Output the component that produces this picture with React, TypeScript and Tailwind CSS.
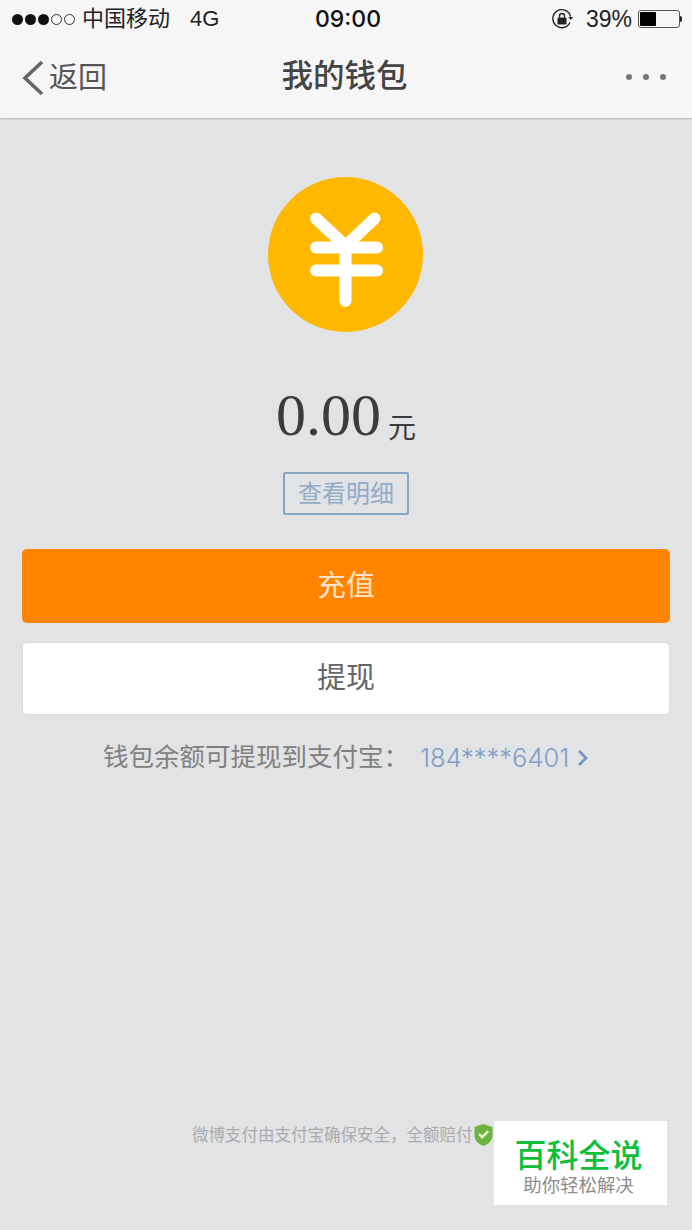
const cjk = "font-['Liberation_Sans','Noto_Sans_CJK_SC',sans-serif]";

function StatusBar() {
  return (
    <div className="flex h-[38px] items-center justify-between pl-[12px] pr-[10px] text-[22px] leading-none text-[#222]">
      <div className="flex w-[240px] items-center">
        <div className="flex items-center gap-[2px]">
          <span className="h-[11px] w-[11px] rounded-full bg-[#111]" />
          <span className="h-[11px] w-[11px] rounded-full bg-[#111]" />
          <span className="h-[11px] w-[11px] rounded-full bg-[#111]" />
          <span className="h-[11px] w-[11px] rounded-full border border-[#333]" />
          <span className="h-[11px] w-[11px] rounded-full border border-[#333]" />
        </div>
        <span className="ml-[7px]">中国移动</span>
        <span className="ml-[20px] text-[22px]">4G</span>
      </div>
      <span className="ml-[2px] font-['Inter',sans-serif] text-[23px] font-medium text-[#111]">09:00</span>
      <div className="flex w-[240px] items-center justify-end">
        <svg width="24" height="22" viewBox="0 0 24 22" className="mr-[11px]">
          <path d="M19.6 8.5A9 9 0 1 0 19 14.5" fill="none" stroke="#222" strokeWidth="1.4" />
          <path d="M17.2 9h5l-2.5 3z" fill="#222" />
          <rect x="6.5" y="9.5" width="9" height="7" rx="1" fill="#222" />
          <path d="M8.5 9.5V8a2.5 2.5 0 0 1 5 0v1.5" fill="none" stroke="#222" strokeWidth="1.4" />
        </svg>
        <span className="mr-[6px] text-[23px]">39%</span>
        <div className="flex h-[18px] w-[42px] items-center rounded-[3px] border border-[#555] p-[1px]">
          <div className="h-full w-[16px] rounded-[1px] bg-[#000]" />
        </div>
        <span className="h-[6px] w-[2px] rounded-r-[2px] bg-[#222]" />
      </div>
    </div>
  );
}

function NavBar() {
  return (
    <div className="relative flex h-[80px] items-center justify-between pb-[2px] pl-[21px] pr-[26px] text-[#444]">
      <div className="flex items-center">
        <svg width="24" height="38" viewBox="0 0 24 38" className="mt-[2px]">
          <path d="M21 3L4 19l17 16" fill="none" stroke="#666" strokeWidth="3.6" />
        </svg>
        <span className="ml-[4px] mt-[2px] text-[29px] leading-none text-[#555]">返回</span>
      </div>
      <span className="text-[31.5px] font-medium leading-none">我的钱包</span>
      <div className="flex w-[84px] justify-end gap-[11px]">
        <span className="h-[6px] w-[6px] rounded-full bg-[#777]" />
        <span className="h-[6px] w-[6px] rounded-full bg-[#777]" />
        <span className="h-[6px] w-[6px] rounded-full bg-[#777]" />
      </div>
    </div>
  );
}

export default function App() {
  return (
    <div className={`relative flex h-[1230px] w-[692px] flex-col overflow-hidden bg-[#e1e3e5] ${cjk}`}>
      <div className="h-[118px] bg-[#f6f6f7] shadow-[0_1px_2px_rgba(0,0,0,0.2)]">
        <StatusBar />
        <NavBar />
      </div>

      <div className="flex flex-1 flex-col items-center px-[22px] pt-[59px]">
        <div className="mr-[2px] flex h-[155px] w-[155px] items-center justify-center rounded-full bg-[#ffb800]">
          <svg width="76" height="96" viewBox="0 0 76 96" className="overflow-visible">
            <g fill="none" stroke="#fff" strokeWidth="12" strokeLinecap="round">
              <path d="M9 11.5L38.5 39L67.5 11.5" />
              <path d="M9 40.5h61M9 63.5h61M38.5 40v54" />
            </g>
          </svg>
        </div>

        <div className="mt-[51px] flex h-[64px] items-end leading-none text-[#3c3c3c]">
          <span className="font-['Liberation_Serif',serif] text-[60px] leading-[64px]">0.00</span>
          <span className="mb-[4px] ml-[7px] text-[28px] leading-none">元</span>
        </div>

        <div className="mt-[25px] flex h-[43px] w-[126px] items-center justify-center rounded-[2px] border-2 border-[#87a6c4] text-[24px] leading-none text-[#92abc8]">
          查看明细
        </div>

        <div className="mt-[34px] flex h-[74px] w-full items-center justify-center rounded-[5px] bg-[#ff8400] text-[29px] leading-none text-[#fde3c8]">
          充值
        </div>
        <div className="mt-[19px] flex h-[73px] w-full items-center justify-center rounded-[5px] border border-[#d8dadc] bg-white text-[29px] leading-none text-[#666]">
          提现
        </div>

        <div className="mt-[28px] flex h-[30px] w-full items-center justify-start pl-[81px] text-[25.5px] leading-none">
          <span className="text-[#808080]">钱包余额可提现到支付宝：</span>
          <span className="ml-[11px] font-['Inter',sans-serif] text-[25.5px] font-light text-[#7f9fc6]">184****6401</span>
          <svg width="12" height="18" viewBox="0 0 12 18" className="ml-[8px]">
            <path d="M2 2l7 7-7 7" fill="none" stroke="#6f94c4" strokeWidth="2.6" />
          </svg>
        </div>

        <div className="mb-[82px] mt-auto flex h-[26px] w-full items-center pl-[170px] text-[16.5px] leading-none text-[#a9abad]">
          <span>微博支付由支付宝确保安全，全额赔付</span>
          <svg width="21" height="24" viewBox="0 0 20 24" className="shrink-0">
            <path d="M10 1l9 3v8c0 6-4 9-9 11-5-2-9-5-9-11V4z" fill="#6cb33f" />
            <path d="M5.5 11l3.2 3.2 6-6" fill="none" stroke="#e6f5d8" strokeWidth="2.4" />
          </svg>
        </div>
      </div>

      {/* watermark sits over the footer */}
      <div className="absolute left-[494px] top-[1121px] flex h-[84px] w-[173px] flex-col items-center bg-white pr-[4px] pt-[19px]">
        <span className="text-[32px] font-medium leading-none text-[#0fbf3c]">百科全说</span>
        <span className="mt-[5px] text-[18.4px] leading-none text-[#8c8c8c]">助你轻松解决</span>
      </div>
    </div>
  );
}
